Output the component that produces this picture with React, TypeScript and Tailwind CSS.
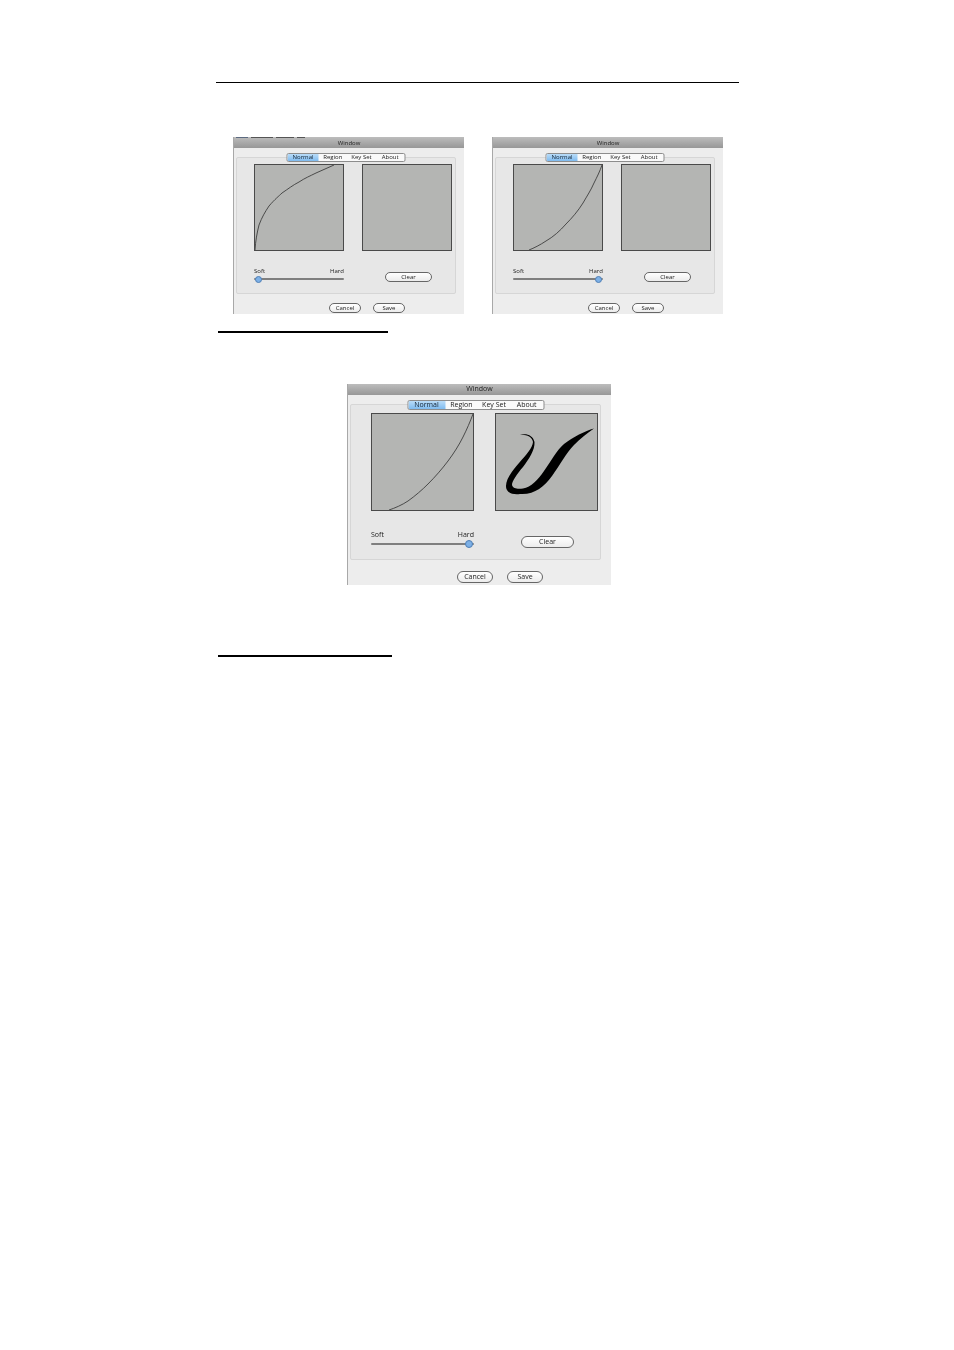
const small = {
  win: "w-[231px] h-[177px] text-[6px]",
  title: "h-[11px] pt-[1px] text-[6px]",
  body: "pl-[2px] pr-[8px] pt-[9px]",
  panel: "h-[137px] pl-[17px] pr-[3px] pt-[6px]",
  tabs: "w-[119px] h-[9px] top-[-5px] text-[6px]",
  tabActive: "w-[31px]",
  plots: "gap-[18px]",
  plot: "w-[90px] h-[87px]",
  lower: "mt-[17px] gap-[41px]",
  slider: "w-[90px]",
  track: "mt-[2px] h-[6px]",
  thumb: "w-[7px] h-[7px] top-[-0.5px]",
  thumbEnd: "right-[1px]",
  thumbStart: "left-[1px]",
  clear: "w-[47px] h-[10px] mt-[4px]",
  footer: "gap-[12px] pt-[9px] pl-[93px]",
  btn: "w-[32px] h-[10px]",
};

const large = {
  win: "w-[264px] h-[201px] text-[7px]",
  title: "h-[11px] pb-[1px] text-[7px]",
  body: "pl-[2px] pr-[10px] pt-[9px]",
  panel: "h-[156px] pl-[20px] pr-[2px] pt-[8px]",
  tabs: "w-[137px] h-[10px] top-[-5px] text-[7px]",
  tabActive: "w-[37px]",
  plots: "gap-[21px]",
  plot: "w-[103px] h-[98px]",
  lower: "mt-[20px] gap-[47px]",
  slider: "w-[103px]",
  track: "mt-[2px] h-[7px]",
  thumb: "w-[8px] h-[8px] top-[-0.5px]",
  thumbEnd: "right-[1px]",
  thumbStart: "left-[1px]",
  clear: "w-[53px] h-[12px] mt-[5px]",
  footer: "gap-[14px] pt-[11px] pl-[107px]",
  btn: "w-[36px] h-[12px]",
};

type Sizes = typeof small;

function Button({ label, size }: { label: string; size: string }) {
  return (
    <div className={`${size} flex shrink-0 items-center justify-center rounded-full border border-[#666] bg-gradient-to-b from-[#ffffff] to-[#ececec] text-[#222]`}>
      {label}
    </div>
  );
}

function Plot({ size, children }: { size: string; children?: React.ReactNode }) {
  return <div className={`${size} shrink-0 border border-[#4a4a4a] bg-[#b4b5b3]`}>{children}</div>;
}

function Curve({ w, h, d }: { w: number; h: number; d: string }) {
  return (
    <svg viewBox={`0 0 ${w} ${h}`} className="block w-full h-full">
      <path d={d} fill="none" stroke="#2e2e2e" strokeWidth="0.8" />
    </svg>
  );
}

function Window({
  s,
  thumbRight,
  scrap,
  left,
  right,
}: {
  s: Sizes;
  thumbRight?: boolean;
  scrap?: boolean;
  left: React.ReactNode;
  right?: React.ReactNode;
}) {
  return (
    <div className={`${s.win} relative shrink-0 overflow-hidden border-l border-[#a8a8a8] bg-[#ededed] text-[#222] blur-[0.4px] [font-family:'Open_Sans',sans-serif]`}>
      {scrap && (
        <div className="absolute left-[2px] top-0 flex h-[1px] gap-[3px]">
          <div className="w-[12px] bg-[#5b6a80]" />
          <div className="w-[22px] bg-[#555]" />
          <div className="w-[18px] bg-[#555]" />
          <div className="w-[8px] bg-[#555]" />
        </div>
      )}
      <div className={`${s.title} flex items-center justify-center bg-gradient-to-b from-[#bdbdbd] to-[#979797] text-[#222]`}>
        Window
      </div>
      <div className={s.body}>
        <div className={`${s.panel} relative rounded-[2px] border border-[#d6d6d6] bg-[#e7e7e7]`}>
          <div className={`${s.tabs} absolute left-1/2 -translate-x-1/2 flex items-center overflow-hidden rounded-[2px] border border-[#8d8d8d] bg-[#fafafa]`}>
            <div className={`${s.tabActive} flex h-full items-center justify-center bg-gradient-to-b from-[#b9dcf8] to-[#7fbbef] text-[#123]`}>
              Normal
            </div>
            <div className="flex h-full flex-1 items-center justify-center">Region</div>
            <div className="flex h-full flex-1 items-center justify-center whitespace-nowrap">Key Set</div>
            <div className="flex h-full flex-1 items-center justify-center">About</div>
          </div>
          <div className={`flex ${s.plots}`}>
            {left}
            {right ?? <Plot size={s.plot} />}
          </div>
          <div className={`flex ${s.lower}`}>
            <div className={`${s.slider} shrink-0`}>
              <div className="flex justify-between leading-none">
                <span>Soft</span>
                <span>Hard</span>
              </div>
              <div className={`${s.track} relative flex items-center`}>
                <div className="h-[2px] w-full rounded-full bg-[#7f7f7f]" />
                <div
                  className={`${s.thumb} absolute rounded-full border border-[#4f7fb5] bg-[#7db0e6] ${
                    thumbRight ? s.thumbEnd : s.thumbStart
                  }`}
                />
              </div>
            </div>
            <Button label="Clear" size={s.clear} />
          </div>
        </div>
        <div className={`flex ${s.footer}`}>
          <Button label="Cancel" size={s.btn} />
          <Button label="Save" size={s.btn} />
        </div>
      </div>
    </div>
  );
}

export default function App() {
  return (
    <div className="h-[1350px] w-[954px] bg-white pt-[82px]">
      <div className="ml-[216px] h-[1px] w-[523px] bg-black" />
      <div className="ml-[233px] mt-[54px] flex gap-[28px]">
        <Window
          s={small}
          scrap
          left={
            <Plot size={small.plot}>
              <Curve w={88} h={85} d="M0 85 C0.5 76 2 68 4 60 C7 52 10 47 14 41 C20 34 24 31 27 28 C33 24 38 20 44 17 C50 13 55 11 61 8 C67 5 73 3 79 0" />
            </Plot>
          }
        />
        <Window
          s={small}
          thumbRight
          left={
            <Plot size={small.plot}>
              <Curve w={88} h={85} d="M15 85 C20 83 26 80 32 76 C39 72 46 66 52 59 C58 53 64 46 69 38 C73 31 77 25 80 18 C83 12 86 6 88 0" />
            </Plot>
          }
        />
      </div>
      <div className="ml-[218px] mt-[17px] h-[2px] w-[170px] bg-black" />
      <div className="ml-[347px] mt-[51px]">
        <Window
          s={large}
          thumbRight
          left={
            <Plot size={large.plot}>
              <Curve w={101} h={96} d="M17 96 C23 94 30 91 36 87 C43 82 50 76 56 70 C63 63 70 55 76 47 C82 39 87 31 91 23 C95 15 98 8 101 0" />
            </Plot>
          }
          right={
            <Plot size={large.plot}>
              <svg viewBox="0 0 101 96" className="block h-full w-full">
                <path
                  fill="#000"
                  d="M24 21 C30 19 37 21 38.5 28 C39 36 33 45 27 53 C21 60 16 67 16 71 C17 75 22 75 27 74.5 C35 73 42 66 48 57 C55 47 61 36 68 30 C77 23 89 17 98 14.5 C91 19 84 25 78 31 C70 39 64 51 56 62 C48 73 38 81 24 80 C15 81 10 78 10 72 C10 65 16 57 23 49 C30 41 36.5 34 37 28 C36 22 30 20.5 24 21 Z"
                />
              </svg>
            </Plot>
          }
        />
      </div>
      <div className="ml-[218px] mt-[70px] h-[2px] w-[174px] bg-black" />
    </div>
  );
}
